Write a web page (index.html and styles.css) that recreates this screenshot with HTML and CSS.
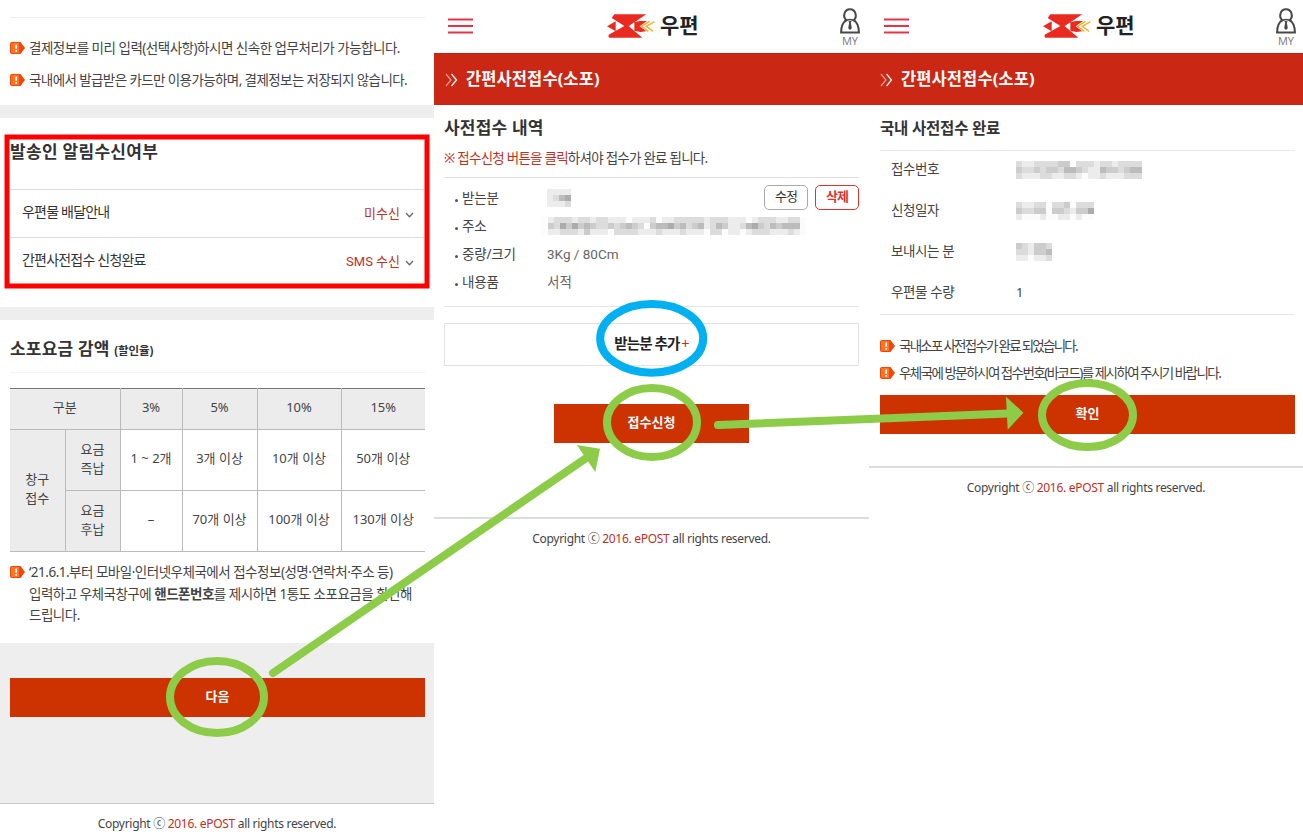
FILE: index.html
```html
<!DOCTYPE html>
<html lang="ko">
<head>
    <meta charset="UTF-8">
    <meta name="viewport" content="width=device-width, initial-scale=1.0">
    <title>간편사전접수(소포)</title>
    <link rel="stylesheet" href="styles.css">
</head>
<body>

    <!-- Shared icons -->
    <svg class="sprite" aria-hidden="true">
        <symbol id="icon-notice" viewBox="0 0 15 12">
            <path d="M2 0h8.500l4.500 6-4.500 6H2Q0 12 0 10V2Q0 0 2 0z" fill="#f04808"/>
            <path d="M2 1h7v10H2Q1 11 1 10V2Q1 1 2 1z" fill="#ff7420"/>
            <path d="M6.200 2.500v4.300M6.200 8v1.700" stroke="#fff" stroke-width="1.700"/>
        </symbol>
        <symbol id="icon-menu" viewBox="0 0 25 16">
            <path d="M0 1.500h25M0 8h25M0 14.500h25" stroke="#e3344a" stroke-width="1.900"/>
        </symbol>
        <symbol id="icon-my" viewBox="0 0 20 26">
            <path d="M6.300 12.200C2.600 9 4 1.300 10 1.300s7.400 7.700 3.700 10.900c3 1.800 5.200 4.300 5.200 12.300H1.100c0-8 2.200-10.500 5.200-12.300z" fill="none" stroke="#484848" stroke-width="2"/>
            <path d="M4.500 13.500Q10 9.500 15.500 13.500" fill="none" stroke="#484848" stroke-width="1.600"/>
            <path d="M8.500 13h3l-.6 2 .9 5.300L10 22l-1.800-1.700.9-5.300z" fill="#484848"/>
        </symbol>
        <symbol id="icon-arrows" viewBox="0 0 13 14">
            <path d="M1 1l5 6-5 6" fill="none" stroke="#eb9c94" stroke-width="1.200"/>
            <path d="M6.500 1l5 6-5 6" fill="none" stroke="#fff" stroke-width="1.300"/>
        </symbol>
        <symbol id="icon-down" viewBox="0 0 9 6">
            <path d="M1 1l3.500 3.700L8 1" fill="none" stroke="#666" stroke-width="1.300"/>
        </symbol>
        <symbol id="logo-post" viewBox="0 0 144 72">
            <path d="M14 12L22 1H118L62 38H56z" fill="#ea2a20"/>
            <path d="M56 34H62L106 71H8Q3 70 5 62z" fill="#ea2a20"/>
            <path d="M0 37L26 22V52z" fill="#ea2a20"/>
            <path d="M82 24L100 21H120L98 37L118 52L100 54L82 50z" fill="#ea2a20"/>
            <path d="M128 22L104 37L124 52M142 23L118 37L138 52" fill="none" stroke="#f5b335" stroke-width="4.500"/>
        </symbol>
    </svg>

    <main class="board">

        <!-- Screen 1 : options and discount table -->
        <section class="screen">
            <div class="pay-notice">
                <p class="notice"><svg class="ico-notice"><use href="#icon-notice"/></svg><span>결제정보를 미리 입력(선택사항)하시면 신속한 업무처리가 가능합니다.</span></p>
                <p class="notice notice-card"><svg class="ico-notice"><use href="#icon-notice"/></svg><span>국내에서 발급받은 카드만 이용가능하며, 결제정보는 저장되지 않습니다.</span></p>
            </div>

            <div class="alarm">
                <h2 class="alarm-title">발송인 알림수신여부</h2>
                <div class="alarm-row">
                    <span class="alarm-label">우편물 배달안내</span>
                    <span class="alarm-value">미수신<svg class="ico-down"><use href="#icon-down"/></svg></span>
                </div>
                <div class="alarm-row">
                    <span class="alarm-label">간편사전접수 신청완료</span>
                    <span class="alarm-value">SMS 수신<svg class="ico-down"><use href="#icon-down"/></svg></span>
                </div>
            </div>

            <div class="discount">
                <h2 class="discount-title">소포요금 감액 <small>(할인율)</small></h2>
                <table class="rate-table">
                    <colgroup>
                        <col class="c1"><col class="c2"><col class="c3"><col class="c4"><col class="c5"><col class="c6">
                    </colgroup>
                    <tr class="rate-head">
                        <th colspan="2">구분</th>
                        <th>3%</th>
                        <th>5%</th>
                        <th>10%</th>
                        <th>15%</th>
                    </tr>
                    <tr>
                        <th rowspan="2">창구<br>접수</th>
                        <th>요금<br>즉납</th>
                        <td>1 ~ 2개</td>
                        <td>3개 이상</td>
                        <td>10개 이상</td>
                        <td>50개 이상</td>
                    </tr>
                    <tr>
                        <th>요금<br>후납</th>
                        <td>–</td>
                        <td>70개 이상</td>
                        <td>100개 이상</td>
                        <td>130개 이상</td>
                    </tr>
                </table>
                <p class="notice notice-long"><svg class="ico-notice"><use href="#icon-notice"/></svg><span>‘21.6.1.부터 모바일·인터넷우체국에서 접수정보(성명·연락처·주소 등)<br>입력하고 우체국창구에 <b>핸드폰번호</b>를 제시하면 1통도 소포요금을 할인해<br>드립니다.</span></p>
            </div>

            <div class="next-area">
                <button class="btn-red">다음</button>
            </div>
            <footer>Copyright ⓒ <em>2016. ePOST</em> all rights reserved.</footer>
        </section>

        <!-- Screen 2 : request list -->
        <section class="screen">
            <header>
                <svg class="ico-menu"><use href="#icon-menu"/></svg>
                <div class="logo"><svg class="logo-mark"><use href="#logo-post"/></svg><span>우편</span></div>
                <div class="my"><svg class="ico-my"><use href="#icon-my"/></svg><span>MY</span></div>
            </header>
            <div class="title-bar"><svg class="ico-arrows"><use href="#icon-arrows"/></svg><h1>간편사전접수(소포)</h1></div>
            <div class="content">
                <h2 class="list-title">사전접수 내역</h2>
                <p class="list-guide"><em>※ 접수신청 버튼을 클릭</em>하셔야 접수가 완료 됩니다.</p>
                <div class="receiver">
                    <dl>
                        <dt>받는분</dt>
                        <dd><span class="mosaic" data-rows="eeee edba eeed"></span></dd>
                        <dt>주소</dt>
                        <dd><span class="mosaic mosaic-out" data-rows="fedddeddeddeeefeeedfeedddddedddeeefedddeeddf fcdacacbcddcdcbcdfcbbacbdcbedbceedbacdbcbbbf feedddeceeefddddeeedeeedeeefddfeefedddeeedef"></span></dd>
                        <dt>중량/크기</dt>
                        <dd>3Kg / 80Cm</dd>
                        <dt>내용품</dt>
                        <dd>서적</dd>
                    </dl>
                    <div class="receiver-btns">
                        <button class="btn-small">수정</button>
                        <button class="btn-small btn-delete">삭제</button>
                    </div>
                </div>
                <button class="btn-add">받는분 추가<em>+</em></button>
                <button class="btn-red btn-request">접수신청</button>
            </div>
            <footer class="footer-line">Copyright ⓒ <em>2016. ePOST</em> all rights reserved.</footer>
        </section>

        <!-- Screen 3 : complete -->
        <section class="screen">
            <header class="header-last">
                <svg class="ico-menu"><use href="#icon-menu"/></svg>
                <div class="logo"><svg class="logo-mark"><use href="#logo-post"/></svg><span>우편</span></div>
                <div class="my"><svg class="ico-my"><use href="#icon-my"/></svg><span>MY</span></div>
            </header>
            <div class="title-bar"><svg class="ico-arrows"><use href="#icon-arrows"/></svg><h1>간편사전접수(소포)</h1></div>
            <div class="content content-done">
                <h2 class="done-title">국내 사전접수 완료</h2>
                <dl class="done-list">
                    <dt>접수번호</dt>
                    <dd><span class="mosaic" data-rows="deeddddccfdddeddedddd cddcdccdbbcdeebccdcbb deeeddeeddefeedeeeddd"></span></dd>
                    <dt>신청일자</dt>
                    <dd><span class="mosaic" data-rows="deeddfddcfddd cddccfccdecca efffeffeefeff"></span></dd>
                    <dt>보내시는 분</dt>
                    <dd><span class="mosaic" data-rows="cdeccd ddeccb eefeed"></span></dd>
                    <dt>우편물 수량</dt>
                    <dd>1</dd>
                </dl>
                <p class="notice notice-tight notice-first"><svg class="ico-notice"><use href="#icon-notice"/></svg><span>국내소포 사전접수가 완료 되었습니다.</span></p>
                <p class="notice notice-tight"><svg class="ico-notice"><use href="#icon-notice"/></svg><span>우체국에 방문하시여 접수번호(바코드)를 제시하여 주시기 바랍니다.</span></p>
                <button class="btn-red">확인</button>
            </div>
            <footer class="footer-line">Copyright ⓒ <em>2016. ePOST</em> all rights reserved.</footer>
        </section>

        <!-- Guide marks over the screens -->
        <svg class="marks" viewBox="0 0 1303 837">
            <rect class="mark-red" x="7" y="137" width="420" height="149"/>
            <ellipse class="mark-blue" cx="651.700" cy="338.400" rx="51.500" ry="34.300"/>
            <ellipse class="mark-green" cx="217" cy="697" rx="47" ry="36"/>
            <ellipse class="mark-green" cx="652" cy="422.500" rx="45" ry="34.500"/>
            <ellipse class="mark-green" cx="1087.500" cy="415" rx="45.500" ry="32"/>
            <path class="mark-green" d="M273 673L587 457.500M718 425L1008 413.500"/>
            <path class="mark-head" d="M577 445L600 448.700L595.300 472L587 460zM1006 396.700L1023.500 412.700L1007.700 429.700z"/>
        </svg>
    </main>

    <script>
        // Draw the masked personal data as gray cells, one hex digit per cell
        document.querySelectorAll('.mosaic').forEach(box => {
            const rows = box.dataset.rows.split(' ');
            box.style.width = rows[0].length * 6 + 'px';
            rows.join('').split('').forEach(level => {
                const cell = document.createElement('i');
                cell.style.background = level === 'f' ? '#fcfcfc' : `#${(level + 'c').repeat(3)}`;
                box.appendChild(cell);
            });
        });
    </script>
</body>
</html>
```
FILE: styles.css
```css
/* Global Styles */
* {
    box-sizing: border-box;
}

body, h1, h2, p, dl, dd {
    margin: 0;
}

body {
    font-family: "Noto Sans", "Noto Sans CJK KR", sans-serif;
    font-size: 13px;
    color: #444;
    background: #fff;
}

em {
    font-style: normal;
    color: #c0301f;
}

button {
    font-family: inherit;
    font-size: 13px;
    padding: 0;
}

.sprite {
    display: none;
}

.board {
    position: relative;
    width: 1303px;
    height: 837px;
    overflow: hidden;
    display: grid;
    grid-template-columns: 434px 435px 434px;
}

.screen {
    height: 837px;
    display: flex;
    flex-direction: column;
}

/* Header */
header {
    height: 53px;
    display: flex;
    padding: 0 9px 0 14px;
}

.header-last {
    padding: 0 7px 0 15px;
}

.ico-menu {
    width: 25px;
    height: 16px;
    margin-top: 18px;
}

.logo {
    display: flex;
    margin: 14px auto 0 134px;
}

.logo-mark {
    width: 48px;
    height: 24px;
}

.logo span {
    margin-left: 5px;
    font-size: 21px;
    font-weight: bold;
    line-height: 22px;
    color: #222;
}

.my {
    width: 20px;
    display: flex;
    flex-direction: column;
    align-items: center;
    padding-top: 8px;
    font-family: "Open Sans", sans-serif;
    font-size: 11px;
    line-height: 14px;
    color: #777;
}

.ico-my {
    width: 20px;
    height: 26px;
}

.title-bar {
    height: 52px;
    display: flex;
    align-items: center;
    padding: 0 0 4px 11px;
    background: #cb2715;
    border-top: 1px solid #bb2414;
    color: #fff;
}

.ico-arrows {
    width: 13px;
    height: 14px;
    margin: 4px 8px 0 0;
}

.title-bar h1 {
    font-size: 16.5px;
    letter-spacing: 0.1px;
}

/* Notices */
.notice {
    display: flex;
    align-items: center;
    font-size: 13.5px;
    letter-spacing: -0.5px;
    white-space: nowrap;
}

.ico-notice {
    width: 15px;
    height: 12px;
    margin-right: 4px;
    flex: none;
}

.pay-notice {
    height: 118px;
    padding: 17px 0 0 10px;
    border-bottom: 13px solid #eee;
}

.pay-notice::before {
    content: "";
    display: block;
    width: 415px;
    height: 1px;
    margin-bottom: 14px;
    background: #eee;
}

.pay-notice .notice {
    height: 32px;
}

.pay-notice .notice span {
    margin-top: -2px;
}

.notice-card {
    letter-spacing: -0.6px;
}

/* Alarm settings */
.alarm {
    height: 202px;
    padding: 0 10px;
    border-bottom: 13px solid #eee;
}

.alarm-title {
    height: 71px;
    padding-top: 22px;
    font-size: 17px;
    line-height: 24px;
    letter-spacing: 0.3px;
    color: #333;
}

.alarm-row {
    height: 48px;
    display: flex;
    justify-content: space-between;
    padding: 0 11px 0 12px;
    border-top: 1px solid #ddd;
    line-height: 43px;
}

.alarm-label {
    font-size: 14px;
    letter-spacing: -0.8px;
    color: #333;
}

.alarm-value {
    display: flex;
    align-items: center;
    height: 47px;
    line-height: 46px;
    color: #c0301f;
    margin-right: -1px;
    font-family: Roboto, "Noto Sans CJK KR", sans-serif;
}

.ico-down {
    width: 9px;
    height: 6px;
    margin: 2px 0 0 5px;
}

/* Discount table */
.discount {
    height: 323px;
    padding: 0 9px 0 10px;
}

.discount-title {
    height: 53px;
    margin-bottom: 15px;
    padding-top: 17px;
    border-bottom: 1px solid #f3f3f3;
    font-size: 17px;
    line-height: 24px;
    letter-spacing: 0.2px;
    color: #333;
}

.discount-title small {
    font-size: 11.5px;
    letter-spacing: -0.1px;
}

.rate-table {
    width: 415px;
    height: 164px;
    table-layout: fixed;
    border-collapse: collapse;
    border-top: 1px solid #777;
    border-bottom: 1px solid #bbb;
    line-height: 19px;
    text-align: center;
}

.rate-table th, .rate-table td {
    padding: 0 0 3px;
    font-weight: normal;
    border: 1px solid #bbb;
}

.rate-table th {
    background: #ececec;
}

.rate-table tr > :last-child {
    border-right: none;
}

.rate-table tr > th:first-child[rowspan], .rate-head th:first-child {
    border-left: none;
}

.rate-head th {
    border-top: 1px solid #777;
}

.rate-table tr {
    height: 61px;
}

.rate-table .rate-head {
    height: 41px;
}

.c1 { width: 55px; }
.c2 { width: 55px; }
.c3 { width: 62px; }
.c4 { width: 75px; }
.c5 { width: 84px; }
.c6 { width: 84px; }

.notice-long {
    margin-top: 10px;
    align-items: flex-start;
    line-height: 21.5px;
}

.notice-long .ico-notice {
    margin-top: 4px;
}

/* Red buttons */
.btn-red {
    display: block;
    width: 415px;
    height: 39px;
    padding-bottom: 5px;
    border: none;
    background: #cc3300;
    color: #fff;
    font-weight: bold;
}

.next-area {
    height: 160px;
    padding: 35px 0 0 10px;
    background: #eee;
}

footer {
    flex: 1;
    border-top: 1px solid #c8c8c8;
    padding-top: 11px;
    text-align: center;
    font-size: 12px;
    line-height: 18px;
    letter-spacing: -0.3px;
}

.footer-line {
    border-top: 2px solid #dcdcdc;
}

/* Request list */
.content {
    height: 412px;
    padding: 0 10px;
}

.list-title {
    height: 42px;
    padding-top: 11px;
    font-size: 17px;
    line-height: 24px;
    letter-spacing: 0.2px;
    color: #333;
}

.list-guide {
    height: 30px;
    font-size: 13.5px;
    line-height: 23px;
    letter-spacing: -0.75px;
}

.receiver {
    display: flex;
    justify-content: space-between;
    height: 130px;
    border-top: 1px solid #ddd;
    border-bottom: 1px solid #e5e5e5;
}

.receiver dl {
    display: grid;
    grid-template-columns: 92px auto;
    grid-auto-rows: 28px;
    padding: 6px 0 0 11px;
    line-height: 28px;
}

.receiver dt {
    display: flex;
    align-items: center;
    font-size: 13.5px;
    letter-spacing: -0.2px;
}

.receiver dt::before {
    content: "";
    width: 3px;
    height: 3px;
    margin: 4px 4px 0 0;
    border-radius: 50%;
    background: #555;
}

.receiver dd {
    display: flex;
    align-items: center;
    font-family: Roboto, "Noto Sans CJK KR", sans-serif;
    font-size: 13.5px;
    color: #666;
}

.mosaic {
    display: grid;
    grid-template-columns: repeat(auto-fill, 6px);
    grid-auto-rows: 6px;
}

.mosaic-out {
    margin-left: -5px;
}

.receiver-btns {
    display: flex;
    gap: 7px;
    padding-top: 7px;
    margin-left: -60px;
}

.btn-small {
    width: 44px;
    height: 25px;
    padding-bottom: 4px;
    border: 1px solid #aaa;
    border-radius: 5px;
    background: #fff;
    color: #333;
    letter-spacing: -1px;
}

.btn-delete {
    border-color: #dd3333;
    color: #dd3333;
    font-weight: bold;
}

.btn-add {
    display: block;
    width: 415px;
    height: 43px;
    margin: 16px 0 38px;
    padding-bottom: 4px;
    border: 1px solid #e2e2e2;
    background: #fff;
    color: #222;
    font-size: 14.5px;
    font-weight: bold;
    letter-spacing: -0.9px;
}

.btn-add em {
    margin-left: 2px;
    font-weight: normal;
}

.btn-request {
    width: 195px;
    margin: 0 auto;
}

/* Complete */
.content-done {
    height: 361px;
    padding-left: 11px;
}

.done-title {
    height: 45px;
    padding-top: 11px;
    font-size: 15.5px;
    line-height: 24px;
    letter-spacing: -0.2px;
    color: #333;
}

.done-list {
    display: grid;
    grid-template-columns: 125px auto;
    grid-auto-rows: 41px;
    width: 415px;
    height: 165px;
    margin-bottom: 17px;
    padding-left: 11px;
    border-top: 1px solid #e8e8e8;
    border-bottom: 1px solid #e8e8e8;
    line-height: 36px;
}

.done-list dt {
    font-size: 13.5px;
    letter-spacing: -0.4px;
}

.done-list dd .mosaic {
    margin-top: 10px;
}

.notice-tight {
    height: 27px;
    font-size: 13.5px;
    letter-spacing: -1.55px;
}

.notice-tight span {
    margin-top: -2px;
}

.notice-first {
    letter-spacing: -1.75px;
}

.content-done .btn-red {
    margin-top: 9px;
}

/* Guide marks */
.marks {
    position: absolute;
    top: 0;
    left: 0;
    width: 1303px;
    height: 837px;
}

.mark-red, .mark-blue, .mark-green {
    fill: none;
    stroke-width: 8;
    stroke-linecap: round;
}

.mark-red {
    stroke: #ff0000;
    stroke-width: 5;
    stroke-linecap: butt;
}

.mark-blue {
    stroke: #00b0f0;
}

.mark-green {
    stroke: #8dcc49;
}

.mark-head {
    fill: #8dcc49;
}
```
